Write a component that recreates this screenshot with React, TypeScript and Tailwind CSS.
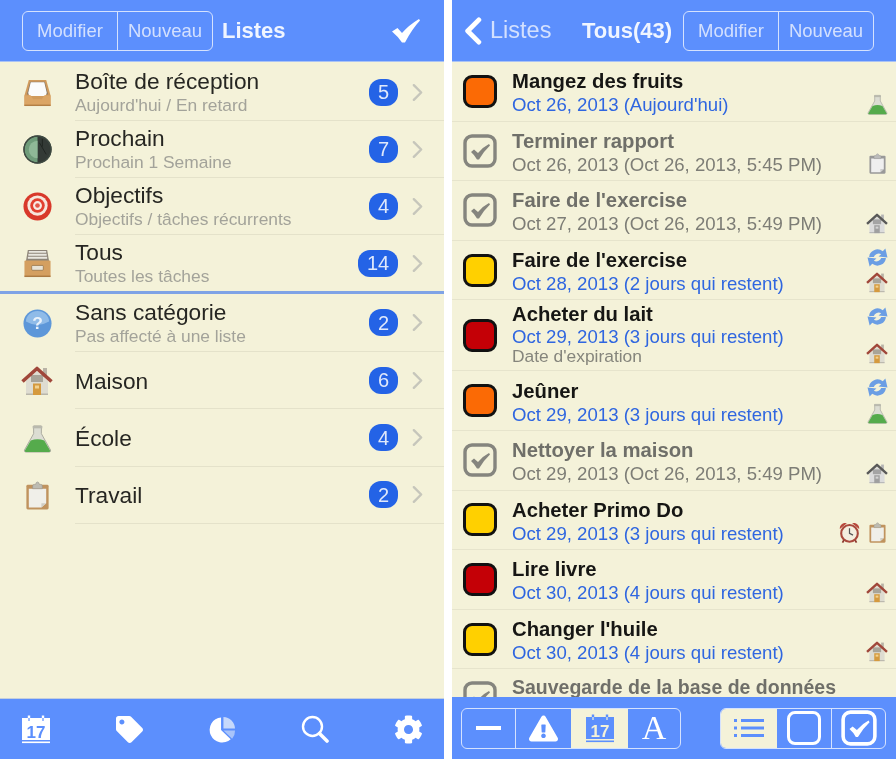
import React from "react";
import { FaCog, FaTag, FaExclamationTriangle } from "react-icons/fa";

type IconProps = { className?: string };

const Inbox = ({ className = "" }: IconProps) => (
  <svg viewBox="0 0 30 30" className={className}>
    <path d="M6 2 H24 L28.5 18 V29 H1.5 V18 Z" fill="#d09a5c" />
    <path d="M7.5 4 H22.5 L26 17 H4 Z" fill="#8a7a66" />
    <path d="M8 4.5 H22 L24.5 15 Q24.5 18.5 21 18.5 H9 Q5.5 18.5 5.5 15 Z" fill="#fbfbfb" />
    <path d="M1.5 18 H8 L10.5 22 H19.5 L22 18 H28.5 V29 H1.5 Z" fill="#dba565" />
    <path d="M1.5 27.5 H28.5 V29 H1.5 Z" fill="#b37f45" />
  </svg>
);

const Radar = ({ className = "" }: IconProps) => (
  <svg viewBox="0 0 30 30" className={className}>
    <circle cx="15" cy="15" r="14.5" fill="#333a36" />
    <path d="M15 1.5 A13.5 13.5 0 0 0 15 28.5 Z" fill="#6f9c7a" />
    <path d="M15 6 A9 9 0 0 0 15 24 Z" fill="#8fb897" />
    <path d="M17 8 L24 20 M20 4 L20 12" stroke="#1f2421" strokeWidth="1" fill="none" />
    <circle cx="15" cy="15" r="14" fill="none" stroke="#3e4a42" strokeWidth="1.4" />
  </svg>
);

const Target = ({ className = "" }: IconProps) => (
  <svg viewBox="0 0 30 30" className={className}>
    <circle cx="15" cy="15" r="14.5" fill="#d8382a" />
    <circle cx="15" cy="14" r="10.5" fill="#f6e6dc" />
    <circle cx="15" cy="14" r="7.5" fill="#e2402f" />
    <circle cx="15" cy="14" r="4.6" fill="#f8ece4" />
    <circle cx="15" cy="14" r="2.4" fill="#e2584a" />
  </svg>
);

const Drawer = ({ className = "" }: IconProps) => (
  <svg viewBox="0 0 30 30" className={className}>
    <path d="M5 1 H25 L27 13 H3 Z" fill="#8c8478" />
    <path d="M6 3 H24 M5.5 6 H24.5 M5 9 H25" stroke="#e9e7e0" strokeWidth="2" />
    <rect x="1.5" y="12" width="27" height="17" rx="1" fill="#d49f60" />
    <rect x="1.5" y="27.5" width="27" height="1.5" fill="#ab7a42" />
    <rect x="9" y="17" width="12" height="5" rx="1" fill="#e8e3d6" stroke="#8a6a3f" strokeWidth="0.7" />
  </svg>
);

const Question = ({ className = "" }: IconProps) => (
  <svg viewBox="0 0 30 30" className={className}>
    <circle cx="15" cy="15" r="14.5" fill="#5d97d9" />
    <path d="M3 13 A12 11 0 0 1 27 13 Q15 20 3 13 Z" fill="#8fbbe8" />
    <text x="15" y="21" textAnchor="middle" fontSize="18" fontWeight="700" fill="#e9f2fb" fontFamily="'Liberation Sans', sans-serif">?</text>
  </svg>
);

const House = ({ className = "" }: IconProps) => (
  <svg viewBox="0 0 32 30" className={className}>
    <path d="M22 2 H26 V11 H22 Z" fill="#b9b3a6" />
    <path d="M5 15 L16 5 L27 15 V29 H5 Z" fill="#dedcd1" />
    <path d="M5 27.5 H27 V29 H5 Z" fill="#b9b6aa" />
    <path d="M10 9 H22 V16 H10 Z" fill="#a8a498" />
    <rect x="12" y="17.5" width="8" height="11.5" fill="#d59a3e" />
    <rect x="14" y="19.5" width="4" height="3" fill="#f3d28e" />
    <path d="M1.5 15.5 L16 2.5 L30.5 15.5" fill="none" stroke="#a0473a" strokeWidth="3.6" strokeLinejoin="round" />
  </svg>
);

const Flask = ({ className = "" }: IconProps) => (
  <svg viewBox="0 0 30 30" className={className}>
    <path d="M11 2 H19 V10 L28.5 27 Q29 29 27 29 H3 Q1 29 1.5 27 L11 10 Z" fill="#dcddd3" stroke="#a9a99e" strokeWidth="1" />
    <path d="M8 17 Q15 14.5 22 17 L28 27.5 Q28.5 29 27 29 H3 Q1.5 29 2 27.5 Z" fill="#55ab4c" />
    <path d="M10 2 H20 V4.5 H10 Z" fill="#b9b9ae" />
  </svg>
);

const Clipboard = ({ className = "" }: IconProps) => (
  <svg viewBox="0 0 30 30" className={className}>
    <rect x="3.5" y="4" width="23" height="25.5" rx="1.5" fill="#c0935e" />
    <path d="M6 8 H24 V23 L19 27.5 H6 Z" fill="#f0efe9" />
    <path d="M19 27.5 L24 23 H19 Z" fill="#cfcdc4" />
    <path d="M10 8 V5 Q10 3.5 12 3.5 H13 Q13.5 1 15 1 Q16.5 1 17 3.5 H18 Q20 3.5 20 5 V8 Z" fill="#bdbbb2" stroke="#96948a" strokeWidth="0.6" />
  </svg>
);

const Sync = ({ className = "" }: IconProps) => (
  <svg viewBox="0 0 20 20" className={className}>
    <path d="M2 9.5 A8 7.5 0 0 1 15 4 L17.5 1.5 L19.5 10 L11 9 L13.5 6.8 A4.8 4.3 0 0 0 6.5 9.5 Z" fill="#6b9ee4" />
    <path d="M18 10.5 A8 7.5 0 0 1 5 16 L2.5 18.5 L0.5 10 L9 11 L6.5 13.2 A4.8 4.3 0 0 0 13.5 10.5 Z" fill="#6b9ee4" />
  </svg>
);

const Alarm = ({ className = "" }: IconProps) => (
  <svg viewBox="0 0 24 24" className={className}>
    <path d="M1 8 A6 6 0 0 1 9 1.5 Z M23 8 A6 6 0 0 0 15 1.5 Z" fill="#b8483c" />
    <path d="M6 20 L4 23.5 M18 20 L20 23.5" stroke="#8a3a30" strokeWidth="2" />
    <circle cx="12" cy="13" r="9.5" fill="#f4eedf" stroke="#a9483c" strokeWidth="2.4" />
    <path d="M12 7 V13 L16 15" fill="none" stroke="#555" strokeWidth="1.4" />
  </svg>
);

const Calendar = ({ fg, bg, className = "" }: { fg: string; bg: string; className?: string }) => (
  <svg viewBox="0 0 30 30" className={className}>
    <rect x="1" y="4" width="28" height="22" fill={fg} />
    <path d="M8 1.5 V6 M22 1.5 V6" stroke={fg} strokeWidth="2.4" />
    <path d="M8 4 V7 M22 4 V7" stroke={bg} strokeWidth="1.2" />
    <rect x="1" y="27.5" width="28" height="1.6" fill={fg} />
    <text x="15" y="24" textAnchor="middle" fontSize="17" fontWeight="700" fill={bg} fontFamily="'Liberation Sans', sans-serif">17</text>
  </svg>
);

const Pie = ({ className = "" }: IconProps) => (
  <svg viewBox="0 0 28 28" className={className}>
    <path d="M12.5 1.5 V14.5 L22.5 24 A13 13 0 1 1 12.5 1.5 Z" fill="#ffffff" />
    <path d="M15 1 A12.5 12.5 0 0 1 27 13 H15 Z" fill="#c6d8fb" />
    <path d="M15 15 H27 A12.5 12.5 0 0 1 24 23.5 Z" fill="#a9c4fa" />
  </svg>
);

const SearchGlyph = ({ className = "" }: IconProps) => (
  <svg viewBox="0 0 28 28" className={className}>
    <circle cx="11.5" cy="11.5" r="9.5" fill="none" stroke="#fff" strokeWidth="2.4" />
    <path d="M18.5 18.5 L26 26" stroke="#fff" strokeWidth="3.6" strokeLinecap="round" />
  </svg>
);

const BoldTick = ({ className = "" }: IconProps) => (
  <svg viewBox="0 0 28 24" className={className}>
    <path d="M0 12.5 L5.5 9 L10 14 Q17 6 27 0 L28 1.5 Q20 10 13 23.5 H10 Q6 17.5 0 12.5 Z" fill="#fff" />
  </svg>
);

const ChevronRightGlyph = ({ className = "" }: IconProps) => (
  <svg viewBox="0 0 12 20" className={className}>
    <path d="M2 2 L10 10 L2 18" fill="none" stroke="currentColor" strokeWidth="2.6" strokeLinecap="round" strokeLinejoin="round" />
  </svg>
);

const ChevronLeftGlyph = ({ className = "" }: IconProps) => (
  <svg viewBox="0 0 17 26" className={className}>
    <path d="M14 2.5 L3.5 13 L14 23.5" fill="none" stroke="currentColor" strokeWidth="4.6" strokeLinecap="round" strokeLinejoin="round" />
  </svg>
);

const ListGlyph = ({ className = "" }: IconProps) => (
  <svg viewBox="0 0 32 20" className={className}>
    <path d="M8 2.5 H31 M8 10 H31 M8 17.5 H31" stroke="#5c8ffd" strokeWidth="2.8" />
    <path d="M1 2.5 H4 M1 10 H4 M1 17.5 H4" stroke="#5c8ffd" strokeWidth="2.8" />
  </svg>
);

const TickBox = ({ className = "" }: IconProps) => (
  <svg viewBox="0 0 34 34" className={className}>
    <rect x="2" y="2" width="30" height="30" rx="7" fill="none" stroke="currentColor" strokeWidth="3.4" />
    <path d="M8 18 L11 15.5 L15 19 Q20 13 26 10 L27 11.5 Q21 17 16 25.5 H14 Q11.5 21 8 18 Z" fill="currentColor" />
  </svg>
);

const HeaderPair = () => (
  <div className="flex h-10 rounded-md border border-[#d5e2fe] text-[18.5px] text-[#d3e0fe]">
    <div className="flex w-[95px] items-center justify-center border-r border-[#d5e2fe]">Modifier</div>
    <div className="flex w-[94px] items-center justify-center">Nouveau</div>
  </div>
);

type ListItem = { title: string; sub?: string; count: number; icon: React.ReactNode; h: string };

const top: ListItem[] = [
  { title: "Boîte de réception", sub: "Aujourd'hui / En retard", count: 5, icon: <Inbox className="h-[29px] w-[29px]" />, h: "h-[57px]" },
  { title: "Prochain", sub: "Prochain 1 Semaine", count: 7, icon: <Radar className="h-[29px] w-[29px]" />, h: "h-[57px]" },
  { title: "Objectifs", sub: "Objectifs / tâches récurrents", count: 4, icon: <Target className="h-[29px] w-[29px]" />, h: "h-[57px]" },
  { title: "Tous", sub: "Toutes les tâches", count: 14, icon: <Drawer className="h-[29px] w-[29px]" />, h: "h-[56px]" },
];
const bottom: ListItem[] = [
  { title: "Sans catégorie", sub: "Pas affecté à une liste", count: 2, icon: <Question className="h-[29px] w-[29px]" />, h: "h-[58px]" },
  { title: "Maison", count: 6, icon: <House className="h-[30px] w-8" />, h: "h-[57.4px]" },
  { title: "École", count: 4, icon: <Flask className="h-[29px] w-[29px]" />, h: "h-[57.4px]" },
  { title: "Travail", count: 2, icon: <Clipboard className="h-[29px] w-[29px]" />, h: "h-[57.4px]" },
];

const ListRow = ({ item, last }: { item: ListItem; last?: boolean }) => (
  <div className={`flex items-center ${item.h}`}>
    <div className="flex w-[75px] shrink-0 justify-center pr-[1px]">{item.icon}</div>
    <div className={`flex h-full flex-1 items-center pr-[21px] ${last ? "" : "border-b border-[#e4e2ca]"}`}>
      <div className="flex-1 pt-[2px]">
        <div className="text-[22.7px] leading-[25px] text-[#262622]">{item.title}</div>
        {item.sub && <div className="text-[17.4px] leading-[23px] text-[#a3a39a]">{item.sub}</div>}
      </div>
      <div className={`flex h-[27px] items-center justify-center rounded-[12px] bg-[#2463e6] text-[20px] text-[#dfe8fb] ${item.count > 9 ? "w-10" : "w-[29px]"}`}>
        {item.count}
      </div>
      <ChevronRightGlyph className="ml-[14px] h-[19px] w-[11px] text-[#c6c6bb]" />
    </div>
  </div>
);

type Task = {
  title: string;
  date?: string;
  extra?: string;
  mark: string;
  done?: boolean;
  tall?: boolean;
  icons: React.ReactNode[];
};

const ic = "h-[21px] w-[21px]";
const hc = "h-[21px] w-[22px]";
const F = <Flask className={ic} />;
const H = <House className={hc} />;
const C = <Clipboard className={ic} />;
const S = <Sync className={ic} />;

const tasks: Task[] = [
  { title: "Mangez des fruits", date: "Oct 26, 2013 (Aujourd'hui)", mark: "bg-[#fb6a05]", icons: [F] },
  { title: "Terminer rapport", date: "Oct 26, 2013 (Oct 26, 2013, 5:45 PM)", mark: "", done: true, icons: [C] },
  { title: "Faire de l'exercise", date: "Oct 27, 2013 (Oct 26, 2013, 5:49 PM)", mark: "", done: true, icons: [H] },
  { title: "Faire de l'exercise", date: "Oct 28, 2013 (2 jours qui restent)", mark: "bg-[#ffd000]", icons: [S, H] },
  { title: "Acheter du lait", date: "Oct 29, 2013 (3 jours qui restent)", extra: "Date d'expiration", mark: "bg-[#c40006]", tall: true, icons: [S, H] },
  { title: "Jeûner", date: "Oct 29, 2013 (3 jours qui restent)", mark: "bg-[#fb6a05]", icons: [S, F] },
  { title: "Nettoyer la maison", date: "Oct 29, 2013 (Oct 26, 2013, 5:49 PM)", mark: "", done: true, icons: [H] },
  { title: "Acheter Primo Do", date: "Oct 29, 2013 (3 jours qui restent)", mark: "bg-[#ffd000]", icons: [<div key="p" className="flex gap-[7px]"><Alarm className={ic} />{C}</div>] },
  { title: "Lire livre", date: "Oct 30, 2013 (4 jours qui restent)", mark: "bg-[#c40006]", icons: [H] },
  { title: "Changer l'huile", date: "Oct 30, 2013 (4 jours qui restent)", mark: "bg-[#ffd000]", icons: [H] },
];

const TaskRow = ({ t }: { t: Task }) => (
  <div className={`flex shrink-0 items-center border-b border-[#e6e4cc] pl-[11px] pr-2 ${t.tall ? "h-[71px]" : "h-[59.6px]"}`}>
    {t.done ? (
      <TickBox className="h-[34px] w-[34px] shrink-0 text-[#85857e]" />
    ) : (
      <div className={`h-[33px] w-[34px] shrink-0 rounded-[9px] border-[3px] border-[#111] ${t.mark}`} />
    )}
    <div className={`ml-[15px] flex-1 whitespace-nowrap ${t.tall ? "pb-[2px]" : "pt-1"}`}>
      <div className={`text-[20.3px] font-bold ${t.tall ? "leading-[23px]" : "leading-[24px]"} ${t.done ? "text-[#6f6f69]" : "text-[#161614]"}`}>{t.title}</div>
      <div className={`text-[18.6px] ${t.tall ? "leading-[21px]" : "leading-[24px]"} ${t.done ? "text-[#7d7d76]" : "text-[#2f66e0]"}`}>{t.date}</div>
      {t.extra && <div className="text-[17.4px] leading-[18px] text-[#85857c]">{t.extra}</div>}
    </div>
    <div className={`flex h-full flex-col items-end py-[6px] ${t.icons.length > 1 ? "justify-between" : "justify-end"} ${t.done ? "grayscale" : ""}`}>
      {t.icons.map((icon, i) => (
        <React.Fragment key={i}>{icon}</React.Fragment>
      ))}
    </div>
  </div>
);

export default function App() {
  return (
    <div className="flex h-[759px] w-[896px] justify-between overflow-hidden bg-white font-['Liberation_Sans',sans-serif] blur-[0.4px]">
      {/* Left screen */}
      <div className="flex w-[444px] flex-col bg-[#f4f2d9]">
        <header className="flex h-[62px] shrink-0 items-center border-b border-[#a9c3f5] bg-[#5c8ffd] pl-[22px] pr-6 text-white">
          <HeaderPair />
          <div className="ml-[9px] flex-1 text-[22px] font-bold text-[#f0f5ff]">Listes</div>
          <BoldTick className="h-6 w-7" />
        </header>
        <div className="flex-1 pt-[2px]">
          {top.map((item) => (
            <ListRow key={item.title} item={item} last={item.title === "Tous"} />
          ))}
          <div className="h-[3px] bg-[#7fa3e6]" />
          {bottom.map((item) => (
            <ListRow key={item.title} item={item} />
          ))}
        </div>
        <footer className="flex h-[61px] shrink-0 items-center justify-between border-t border-[#c5cfdc] bg-[#5c8ffd] pl-[21px] pr-[21px] text-white">
          <Calendar fg="#ffffff" bg="#5c8ffd" className="h-[30px] w-[30px]" />
          <div className="flex w-[30px] justify-center"><FaTag className="h-[27px] w-[27px]" /></div>
          <div className="flex w-[30px] justify-center"><Pie className="h-[27px] w-[27px]" /></div>
          <div className="flex w-[30px] justify-center"><SearchGlyph className="h-7 w-7" /></div>
          <div className="flex w-[30px] justify-center"><FaCog className="h-[29px] w-[29px]" /></div>
        </footer>
      </div>

      {/* Right screen */}
      <div className="flex w-[444px] flex-col bg-[#f4f2d9]">
        <header className="flex h-[62px] shrink-0 items-center border-b border-[#a9c3f5] bg-[#5c8ffd] pl-3 pr-[22px] text-white">
          <ChevronLeftGlyph className="h-[28px] w-[18px] text-white" />
          <div className="ml-2 w-[92px] text-[23.5px] text-[#d3e0fe]">Listes</div>
          <div className="flex-1 text-[22px] font-bold text-[#f0f5ff]">Tous(43)</div>
          <HeaderPair />
        </header>
        <div className="flex min-h-0 flex-1 flex-col overflow-hidden">
          {tasks.map((t, i) => (
            <TaskRow key={i} t={t} />
          ))}
          <div className="flex min-h-0 flex-1 items-start pl-[11px] pt-[3px]">
            <TickBox className="mt-[9px] h-[34px] w-[34px] shrink-0 text-[#85857e]" />
            <div className="ml-[15px] whitespace-nowrap pt-[6px] text-[19.5px] font-bold leading-[18px] text-[#6f6f69]">Sauvegarde de la base de données</div>
          </div>
        </div>
        <footer className="flex h-[62px] shrink-0 items-center justify-between bg-[#5c8ffd] pl-[9px] pr-[10px] text-white">
          <div className="flex h-[41px] overflow-hidden rounded-md border border-[#d5e2fe]">
            <div className="flex w-[54px] items-center justify-center border-r border-[#d5e2fe]">
              <div className="h-[4px] w-[25px] bg-white" />
            </div>
            <div className="flex w-[55px] items-center justify-center">
              <FaExclamationTriangle className="h-[27px] w-[29px]" />
            </div>
            <div className="flex w-[57px] items-center justify-center bg-[#f4f2d9]">
              <Calendar fg="#5c8ffd" bg="#f4f2d9" className="h-[30px] w-[30px]" />
            </div>
            <div className="flex w-[52px] items-center justify-center font-['Liberation_Serif',serif] text-[34px] leading-none">A</div>
          </div>
          <div className="flex h-[41px] overflow-hidden rounded-md border border-[#d5e2fe]">
            <div className="flex w-[56px] items-center justify-center bg-[#f4f2d9]">
              <ListGlyph className="h-5 w-8" />
            </div>
            <div className="flex w-[55px] items-center justify-center border-r border-[#d5e2fe]">
              <div className="h-[34px] w-[34px] rounded-lg border-[3px] border-white" />
            </div>
            <div className="flex w-[53px] items-center justify-center">
              <TickBox className="h-[36px] w-[36px] text-white" />
            </div>
          </div>
        </footer>
      </div>
    </div>
  );
}
